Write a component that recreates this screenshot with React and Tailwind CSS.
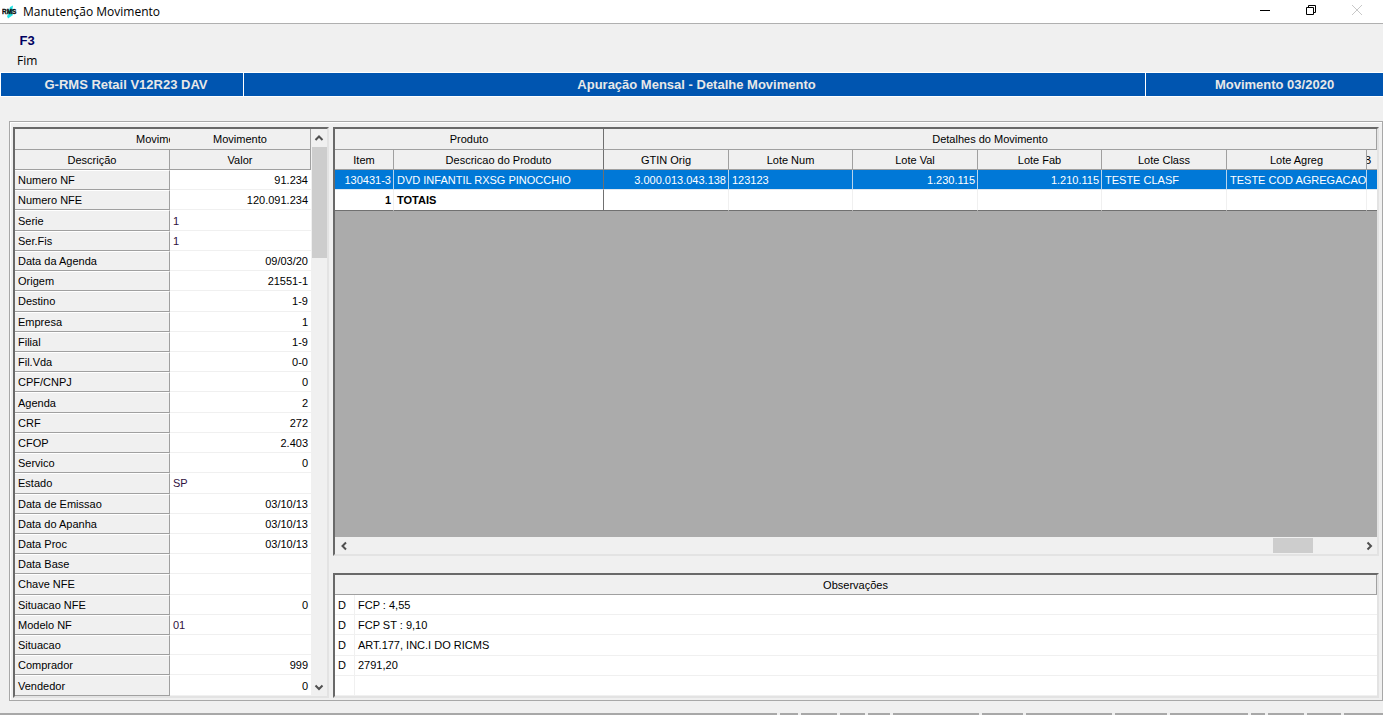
const movimento = [
  ['Numero NF', '91.234'],
  ['Numero NFE', '120.091.234'],
  ['Serie', '1', 'left'],
  ['Ser.Fis', '1', 'left'],
  ['Data da Agenda', '09/03/20'],
  ['Origem', '21551-1'],
  ['Destino', '1-9'],
  ['Empresa', '1'],
  ['Filial', '1-9'],
  ['Fil.Vda', '0-0'],
  ['CPF/CNPJ', '0'],
  ['Agenda', '2'],
  ['CRF', '272'],
  ['CFOP', '2.403'],
  ['Servico', '0'],
  ['Estado', 'SP', 'left'],
  ['Data de Emissao', '03/10/13'],
  ['Data do Apanha', '03/10/13'],
  ['Data Proc', '03/10/13'],
  ['Data Base', ''],
  ['Chave NFE', ''],
  ['Situacao NFE', '0'],
  ['Modelo NF', '01', 'left'],
  ['Situacao', ''],
  ['Comprador', '999'],
  ['Vendedor', '0'],
];

const colunas = ['Item', 'Descricao do Produto', 'GTIN Orig', 'Lote Num', 'Lote Val', 'Lote Fab', 'Lote Class', 'Lote Agreg'];

const produto = [
  ['130431-3', 'right'],
  ['DVD INFANTIL RXSG PINOCCHIO', 'left'],
  ['3.000.013.043.138', 'right'],
  ['123123', 'left'],
  ['1.230.115', 'right'],
  ['1.210.115', 'right'],
  ['TESTE CLASF', 'left'],
  ['TESTE COD AGREGACAO', 'left'],
];

const observacoes = [
  ['D', 'FCP : 4,55'],
  ['D', 'FCP ST : 9,10'],
  ['D', 'ART.177, INC.I DO RICMS'],
  ['D', '2791,20'],
  ['', '\u00a0'],
];

const HEAD = 'h-5 overflow-hidden whitespace-nowrap border-b border-r border-[#a0a0a0] bg-[#f0f0f0] p-0 text-center font-normal';

function Arrow({ d }) {
  return (
    <svg viewBox="0 0 10 10" className="h-2.5 w-2.5" fill="none" stroke="#505050" strokeWidth="2">
      <path d={d} />
    </svg>
  );
}

function TitleBar() {
  return (
    <header className="flex h-6 shrink-0 items-center border-b border-[#b0b0b0] bg-white pl-0.5 pr-[3px] font-['Open_Sans',sans-serif]">
      <svg viewBox="0 0 18 16" className="h-4 w-[18px]">
        <path d="M8 3L11 1.5L10.5 5L12.5 5.5L10 8L11 11L6 14.5L5 12L7 9.5L4.5 9L7 6.5Z" fill="#22e3e6" />
        <text x="0" y="9.5" fontSize="6.5" fontWeight="900" fontFamily="Liberation Sans" fill="#111" stroke="#111" strokeWidth="0.3">RMS</text>
      </svg>
      <h1 className="ml-[3px] text-xs">Manutenção Movimento</h1>
      <div className="ml-auto flex pb-1">
        <button aria-label="Minimizar" className="flex h-5 w-[46px] items-center justify-center">
          <svg viewBox="0 0 12 12" className="h-3 w-3" stroke="#000" fill="none"><path d="M1 6.5H11" /></svg>
        </button>
        <button aria-label="Restaurar" className="flex h-5 w-[46px] items-center justify-center">
          <svg viewBox="0 0 12 12" className="h-3 w-3" stroke="#000" fill="none"><path d="M1.5 3.5H8.5V10.5H1.5ZM3.5 3.5V1.5H10.5V8.5H8.5" /></svg>
        </button>
        <button aria-label="Fechar" className="flex h-5 w-[46px] items-center justify-center">
          <svg viewBox="0 0 12 12" className="h-3 w-3" stroke="#c8c8c8" fill="none"><path d="M1 1L11 11M11 1L1 11" /></svg>
        </button>
      </div>
    </header>
  );
}

function MovimentoPanel() {
  return (
    <section className="flex w-[316px] shrink-0 border-2 border-[#e3e3e3] border-l-[#696969] border-t-[#696969]">
      <table className="h-full w-[296px] table-fixed border-separate border-spacing-0">
        <colgroup>
          <col className="w-[155px]" />
          <col />
        </colgroup>
        <thead>
          <tr>
            {/* group title is centred over both columns and cut by the second one */}
            <th className="h-[21px] overflow-hidden whitespace-nowrap border-b border-[#a0a0a0] p-0 pl-[121px] text-left font-normal">Movimento</th>
            <th className="h-[21px] border-b border-r border-[#a0a0a0] p-0 font-normal">Movimento</th>
          </tr>
          <tr>
            <th className={HEAD}>Descrição</th>
            <th className={HEAD}>Valor</th>
          </tr>
        </thead>
        <tbody>
          {movimento.map(([label, value, align]) => (
            <tr key={label}>
              <th scope="row" className="border-b border-r border-[#a0a0a0] border-t border-t-white p-0 pl-[3px] text-left font-normal">{label}</th>
              <td className={align === 'left' ? 'border-y border-[#f0f0f0] border-t-white bg-white p-0 pl-[3px] text-left text-[#301040]' : 'border-y border-[#f0f0f0] border-t-white bg-white p-0 pr-[3px] text-right'}>{value}</td>
            </tr>
          ))}
        </tbody>
      </table>
      <div className="flex flex-1 flex-col items-center">
        <button aria-label="Rolar para cima" className="flex h-[18px] w-full items-center justify-center"><Arrow d="M1.5 7L5 3.5L8.5 7" /></button>
        <div className="w-full flex-1"><div className="ml-px h-[111px] w-[15px] bg-[#cdcdcd]" /></div>
        <button aria-label="Rolar para baixo" className="flex h-[18px] w-full items-center justify-center"><Arrow d="M1.5 3.5L5 7L8.5 3.5" /></button>
      </div>
    </section>
  );
}

function ProdutoGrid() {
  return (
    <section className="flex min-h-0 flex-1 flex-col border-2 border-[#e3e3e3] border-l-[#696969] border-t-[#696969] bg-[#ababab]">
      <table className="w-full table-fixed border-separate border-spacing-0">
        <colgroup>
          <col className="w-[59px]" />
          <col className="w-[210px]" />
          <col className="w-[125px]" />
          <col className="w-[124px]" />
          <col className="w-[125px]" />
          <col className="w-[124px]" />
          <col className="w-[125px]" />
          <col className="w-[140px]" />
          <col />
        </colgroup>
        <thead>
          <tr>
            <th colSpan={2} className="h-[21px] border-b border-r border-[#a0a0a0] border-r-[#707070] bg-[#f0f0f0] p-0 font-normal">Produto</th>
            <th colSpan={7} className="h-[21px] border-b border-r border-[#a0a0a0] bg-[#f0f0f0] p-0 font-normal">Detalhes do Movimento</th>
          </tr>
          <tr>
            {colunas.map((c, i) => (
              <th key={c} className={i === 1 ? 'h-5 border-b border-r border-[#a0a0a0] border-r-[#707070] bg-[#f0f0f0] p-0 font-normal' : HEAD}>{c}</th>
            ))}
            <th className="overflow-hidden border-b border-[#a0a0a0] bg-[#f0f0f0] p-0 text-left -indent-[3px] font-normal">B</th>
          </tr>
        </thead>
        <tbody>
          <tr className="bg-[#0078d7] text-white">
            {produto.map(([v, align], i) => (
              <td
                key={v}
                className={[
                  'h-5 whitespace-nowrap border-b border-r border-b-[#e0e8f0] p-0',
                  i === 1 ? 'border-r-[#707070]' : 'border-r-[#b8d4ec]',
                  align === 'right' ? 'pr-0.5 text-right' : 'pl-[3px] text-left',
                ].join(' ')}
              >
                {v}
              </td>
            ))}
            <td className="border-b border-b-[#e0e8f0] p-0" />
          </tr>
          <tr className="bg-white font-bold">
            <td className="h-[21px] border-b border-r border-b-[#707070] border-r-[#f0f0f0] p-0 pr-0.5 text-right">1</td>
            <td className="border-b border-r border-[#707070] p-0 pl-[3px]">TOTAIS</td>
            {colunas.slice(2).map((c) => (
              <td key={c} className="border-b border-r border-b-[#707070] border-r-[#f0f0f0] p-0" />
            ))}
            <td className="border-b border-b-[#707070] p-0" />
          </tr>
        </tbody>
      </table>
      <div className="mt-auto flex h-[17px] items-center bg-[#f0f0f0]">
        <button aria-label="Rolar para a esquerda" className="flex h-full w-[17px] items-center justify-center"><Arrow d="M7 1.5L3.5 5L7 8.5" /></button>
        <div className="flex flex-1 justify-end pr-[47px]"><div className="h-[15px] w-10 bg-[#cdcdcd]" /></div>
        <button aria-label="Rolar para a direita" className="flex h-full w-[17px] items-center justify-center"><Arrow d="M3.5 1.5L7 5L3.5 8.5" /></button>
      </div>
    </section>
  );
}

function Observacoes() {
  return (
    <section className="h-[125px] shrink-0 border-2 border-[#e3e3e3] border-l-[#696969] border-t-[#696969]">
      <table className="h-full w-full table-fixed border-separate border-spacing-0">
        <colgroup>
          <col className="w-5" />
          <col />
        </colgroup>
        <thead>
          <tr>
            <th colSpan={2} className={HEAD}>Observações</th>
          </tr>
        </thead>
        <tbody>
          {observacoes.map(([tipo, texto]) => (
            <tr key={texto} className="bg-white">
              <td className="h-5 border-b border-r border-[#f0f0f0] p-0 pl-[3px]">{tipo}</td>
              <td className="h-5 border-b border-[#f0f0f0] p-0 pl-[3px]">{texto}</td>
            </tr>
          ))}
        </tbody>
      </table>
    </section>
  );
}

function StatusBar() {
  const cell = 'border-t-2 border-[#a8a8a8]';
  return (
    <footer className="flex h-0.5 shrink-0 gap-[3px]">
      <div className={`${cell} flex-1`} />
      <div className={`${cell} w-[18px]`} />
      <div className={`${cell} w-9`} />
      <div className={`${cell} w-[25px]`} />
      <div className={`${cell} w-[22px]`} />
      <div className={`${cell} w-[86px]`} />
      <div className={`${cell} w-[41px]`} />
      <div className={`${cell} w-[86px]`} />
      <div className={`${cell} w-[52px]`} />
      <div className={`${cell} w-[78px]`} />
      <div className={`${cell} w-[14px]`} />
      <div className={`${cell} w-9`} />
      <div className={`${cell} w-[34px]`} />
      <div className={`${cell} w-[39px]`} />
    </footer>
  );
}

export default function App() {
  return (
    <div className="flex h-screen min-h-[640px] flex-col bg-[#f0f0f0] font-['Liberation_Sans',Arial,sans-serif] text-[11px] leading-4 text-black">
      <TitleBar />
      <nav className="flex h-12 shrink-0 px-[17px] pt-[9px]">
        <button className="flex flex-col items-center">
          <span className="h-5 text-[13px] font-bold leading-4 text-[#000060]">F3</span>
          <span className="font-['Open_Sans',sans-serif] text-xs leading-4">Fim</span>
        </button>
      </nav>
      <div className="flex h-[25px] shrink-0 gap-px border-y border-white bg-white pl-px text-center text-[13px] font-bold leading-6 text-[#e8e8e8]">
        <div className="w-[242px] bg-[#0055b0] pl-2">G-RMS Retail V12R23 DAV</div>
        <div className="flex-1 bg-[#0055b0] pl-1">Apuração Mensal - Detalhe Movimento</div>
        <div className="w-[237px] bg-[#0055b0] pl-5">Movimento 03/2020</div>
      </div>
      <main className="mb-3 ml-[9px] mt-6 flex min-h-0 flex-1 gap-1 border border-[#a8a8a8] pb-0.5 pl-[3px] pr-[3px] pt-[5px] shadow-[inset_1px_1px_0_#fff]">
        <MovimentoPanel />
        <div className="flex min-w-0 flex-1 flex-col gap-[17px]">
          <ProdutoGrid />
          <Observacoes />
        </div>
      </main>
      <StatusBar />
    </div>
  );
}
